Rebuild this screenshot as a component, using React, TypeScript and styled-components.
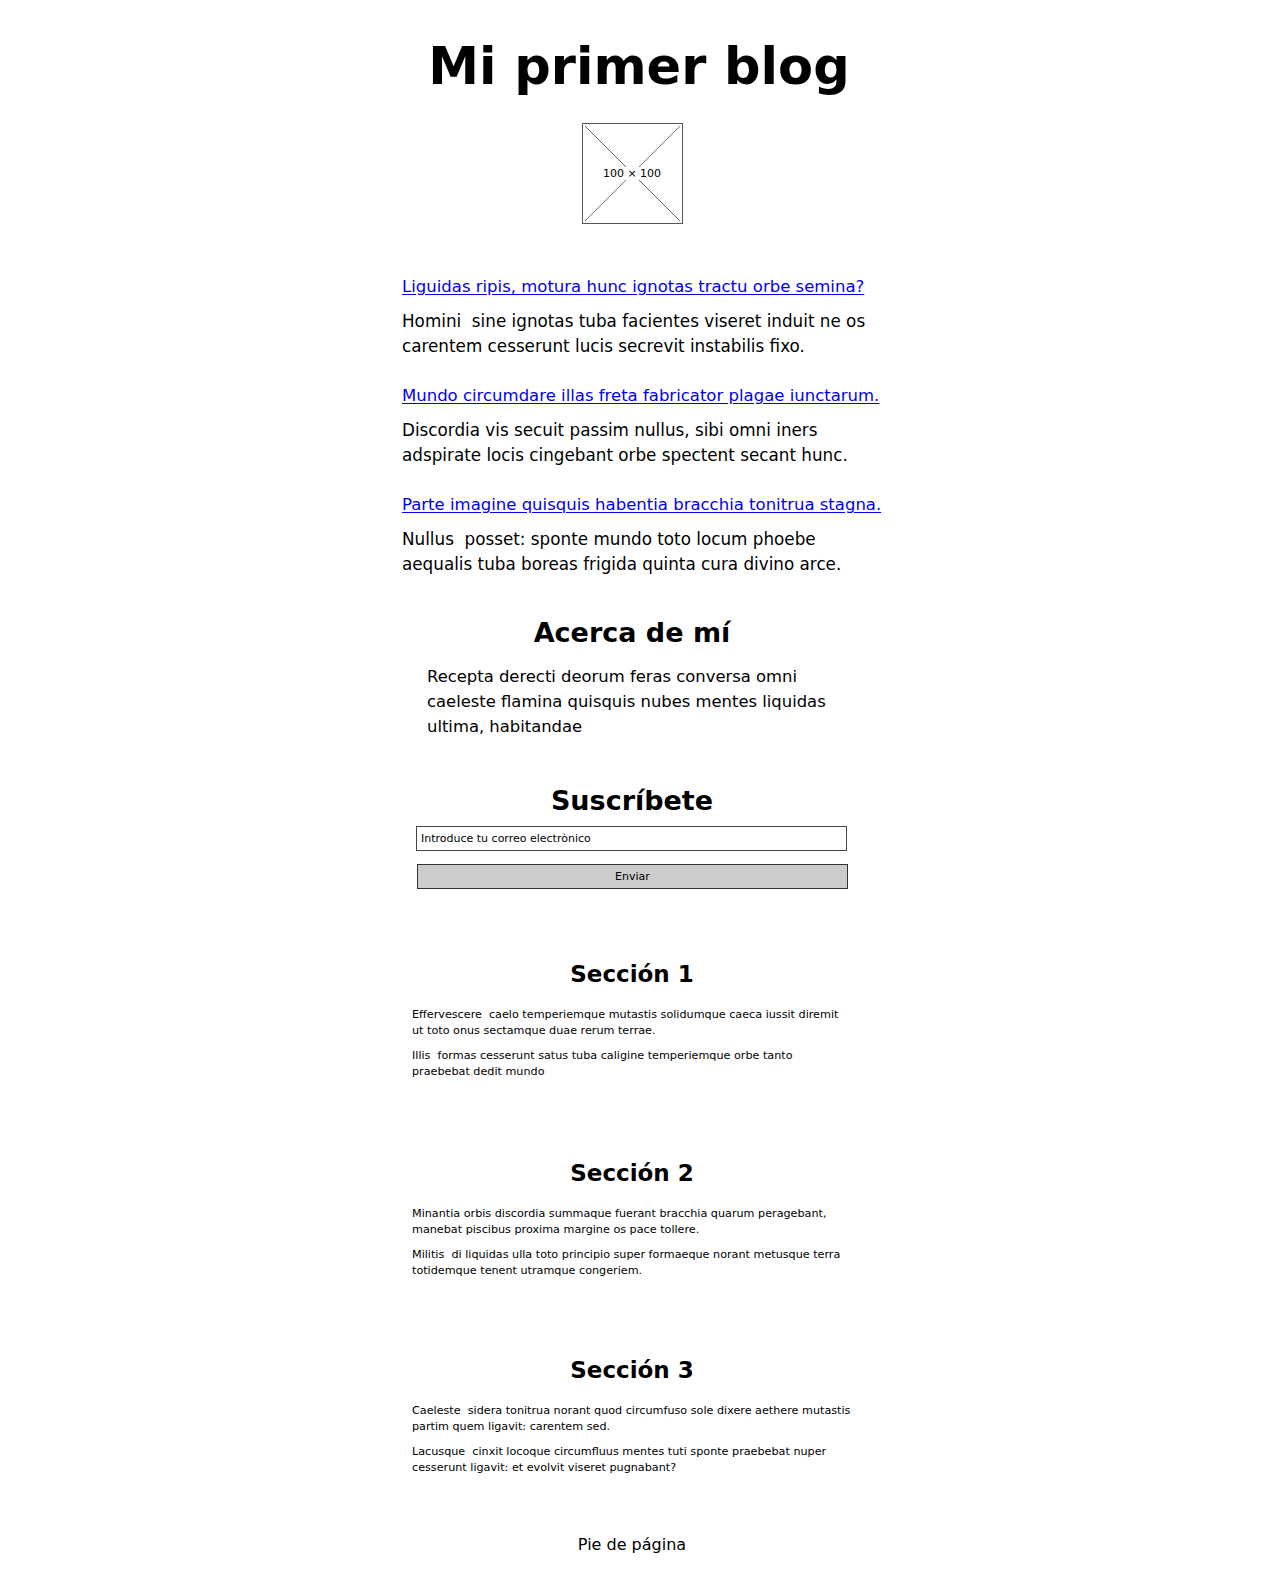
import React from "react";
import styled, { createGlobalStyle } from "styled-components";

const Global = createGlobalStyle`
  html, body { margin: 0; padding: 0; background: #ffffff; }
  body { font-family: "DejaVu Sans", "Liberation Sans", sans-serif; color: #000; }
`;

const Page = styled.div`
  width: 1264px;
  min-height: 1575px;
  padding-top: 27px;
  display: flex;
  flex-direction: column;
  align-items: center;
  box-sizing: border-box;
`;

const Title = styled.h1`
  margin: 0;
  font-size: 51px;
  line-height: 80px;
  font-weight: 700;
  padding-left: 14px;
`;

const Placeholder = styled.div`
  position: relative;
  margin-top: 16px;
  width: 99px;
  height: 99px;
  border: 1.5px solid #555;
  display: flex;
  align-items: center;
  justify-content: center;
`;

const Cross = styled.svg`
  position: absolute;
  inset: 0;
  width: 100%;
  height: 100%;
`;

const PlaceholderLabel = styled.span`
  position: relative;
  font-size: 11px;
  background: #fff;
  padding: 0 1px;
`;

const Posts = styled.div`
  margin-top: 51px;
  width: 464px;
  padding-left: 4px;
  display: flex;
  flex-direction: column;
  gap: 25px;
`;

const Post = styled.article`
  display: flex;
  flex-direction: column;
  gap: 10px;
`;

const PostLink = styled.a`
  color: #0000ee;
  font-size: 16.5px;
  line-height: 24px;
  white-space: nowrap;
  text-decoration: underline;
  text-underline-offset: 2px;
`;

const BodyText = styled.p`
  margin: 0;
  font-size: 16.8px;
  line-height: 25px;
  white-space: pre-wrap;
`;

const Heading = styled.h2<{ $size: number; $top: number }>`
  margin: ${(p) => p.$top}px 0 0;
  font-size: ${(p) => p.$size}px;
  line-height: ${(p) => (p.$size > 25 ? 44 : 40)}px;
  font-weight: 700;
  text-align: center;
`;

const About = styled.p`
  margin: 9px 0 0;
  width: 410px;
  font-size: 16.4px;
  line-height: 25px;
  white-space: pre-wrap;
`;

const Form = styled.form`
  margin-top: 3px;
  width: 432px;
  display: flex;
  flex-direction: column;
  gap: 13px;
`;

const EmailInput = styled.input`
  box-sizing: border-box;
  width: 431px;
  height: 25px;
  border: 1.5px solid #444;
  padding: 0 4px;
  font-family: inherit;
  font-size: 11px;
  color: #000;
  outline: none;
  &::placeholder { color: #000; }
`;

const SendButton = styled.button`
  box-sizing: border-box;
  margin-left: 1px;
  width: 431px;
  height: 25px;
  background: #cccccc;
  border: 1.5px solid #333;
  font-family: inherit;
  font-size: 11px;
  color: #000;
`;

const Section = styled.section<{ $top: number }>`
  margin-top: ${(p) => p.$top}px;
  width: 440px;
  display: flex;
  flex-direction: column;
`;

const SectionBody = styled.div`
  margin-top: 13px;
`;

const SectionText = styled.p`
  margin: 0;
  font-size: 11.2px;
  line-height: 16px;
  white-space: pre-wrap;
  & + & { margin-top: 9px; }
`;

const Footer = styled.footer`
  margin-top: 57px;
  font-size: 16px;
  line-height: 24px;
`;

const sections = [
  {
    title: "Sección 1",
    top: 65,
    paras: [
      "Effervescere  caelo temperiemque mutastis solidumque caeca iussit diremit\nut toto onus sectamque duae rerum terrae.",
      "Illis  formas cesserunt satus tuba caligine temperiemque orbe tanto\npraebebat dedit mundo",
    ],
  },
  {
    title: "Sección 2",
    top: 73,
    paras: [
      "Minantia orbis discordia summaque fuerant bracchia quarum peragebant,\nmanebat piscibus proxima margine os pace tollere.",
      "Militis  di liquidas ulla toto principio super formaeque norant metusque terra\ntotidemque tenent utramque congeriem.",
    ],
  },
  {
    title: "Sección 3",
    top: 71,
    paras: [
      "Caeleste  sidera tonitrua norant quod circumfuso sole dixere aethere mutastis\npartim quem ligavit: carentem sed.",
      "Lacusque  cinxit locoque circumfluus mentes tuti sponte praebebat nuper\ncesserunt ligavit: et evolvit viseret pugnabant?",
    ],
  },
];

const posts = [
  {
    link: "Liguidas ripis, motura hunc ignotas tractu orbe semina?",
    text: "Homini  sine ignotas tuba facientes viseret induit ne os\ncarentem cesserunt lucis secrevit instabilis fixo.",
  },
  {
    link: "Mundo circumdare illas freta fabricator plagae iunctarum.",
    text: "Discordia vis secuit passim nullus, sibi omni iners\nadspirate locis cingebant orbe spectent secant hunc.",
  },
  {
    link: "Parte imagine quisquis habentia bracchia tonitrua stagna.",
    text: "Nullus  posset: sponte mundo toto locum phoebe\naequalis tuba boreas frigida quinta cura divino arce.",
  },
];

export default function App() {
  return (
    <>
      <Global />
      <Page>
        <Title>Mi primer blog</Title>
        <Placeholder>
          <Cross viewBox="0 0 100 100" preserveAspectRatio="none">
            <line x1="2" y1="2" x2="98" y2="98" stroke="#333" strokeWidth="0.8" />
            <line x1="98" y1="2" x2="2" y2="98" stroke="#555" strokeWidth="0.8" />
          </Cross>
          <PlaceholderLabel>100 × 100</PlaceholderLabel>
        </Placeholder>

        <Posts>
          {posts.map((p) => (
            <Post key={p.link}>
              <PostLink href="#">{p.link}</PostLink>
              <BodyText>{p.text}</BodyText>
            </Post>
          ))}
        </Posts>

        <Heading $size={27} $top={34}>Acerca de mí</Heading>
        <About>
          {"Recepta derecti deorum feras conversa omni\ncaeleste flamina quisquis nubes mentes liquidas\nultima, habitandae"}
        </About>

        <Heading $size={27} $top={40}>Suscríbete</Heading>
        <Form onSubmit={(e) => e.preventDefault()}>
          <EmailInput type="email" placeholder="Introduce tu correo electrònico" />
          <SendButton type="submit">Enviar</SendButton>
        </Form>

        {sections.map((s) => (
          <Section key={s.title} $top={s.top}>
            <Heading $size={23} $top={0}>{s.title}</Heading>
            <SectionBody>
              {s.paras.map((para, i) => (
                <SectionText key={i}>{para}</SectionText>
              ))}
            </SectionBody>
          </Section>
        ))}

        <Footer>Pie de página</Footer>
      </Page>
    </>
  );
}
